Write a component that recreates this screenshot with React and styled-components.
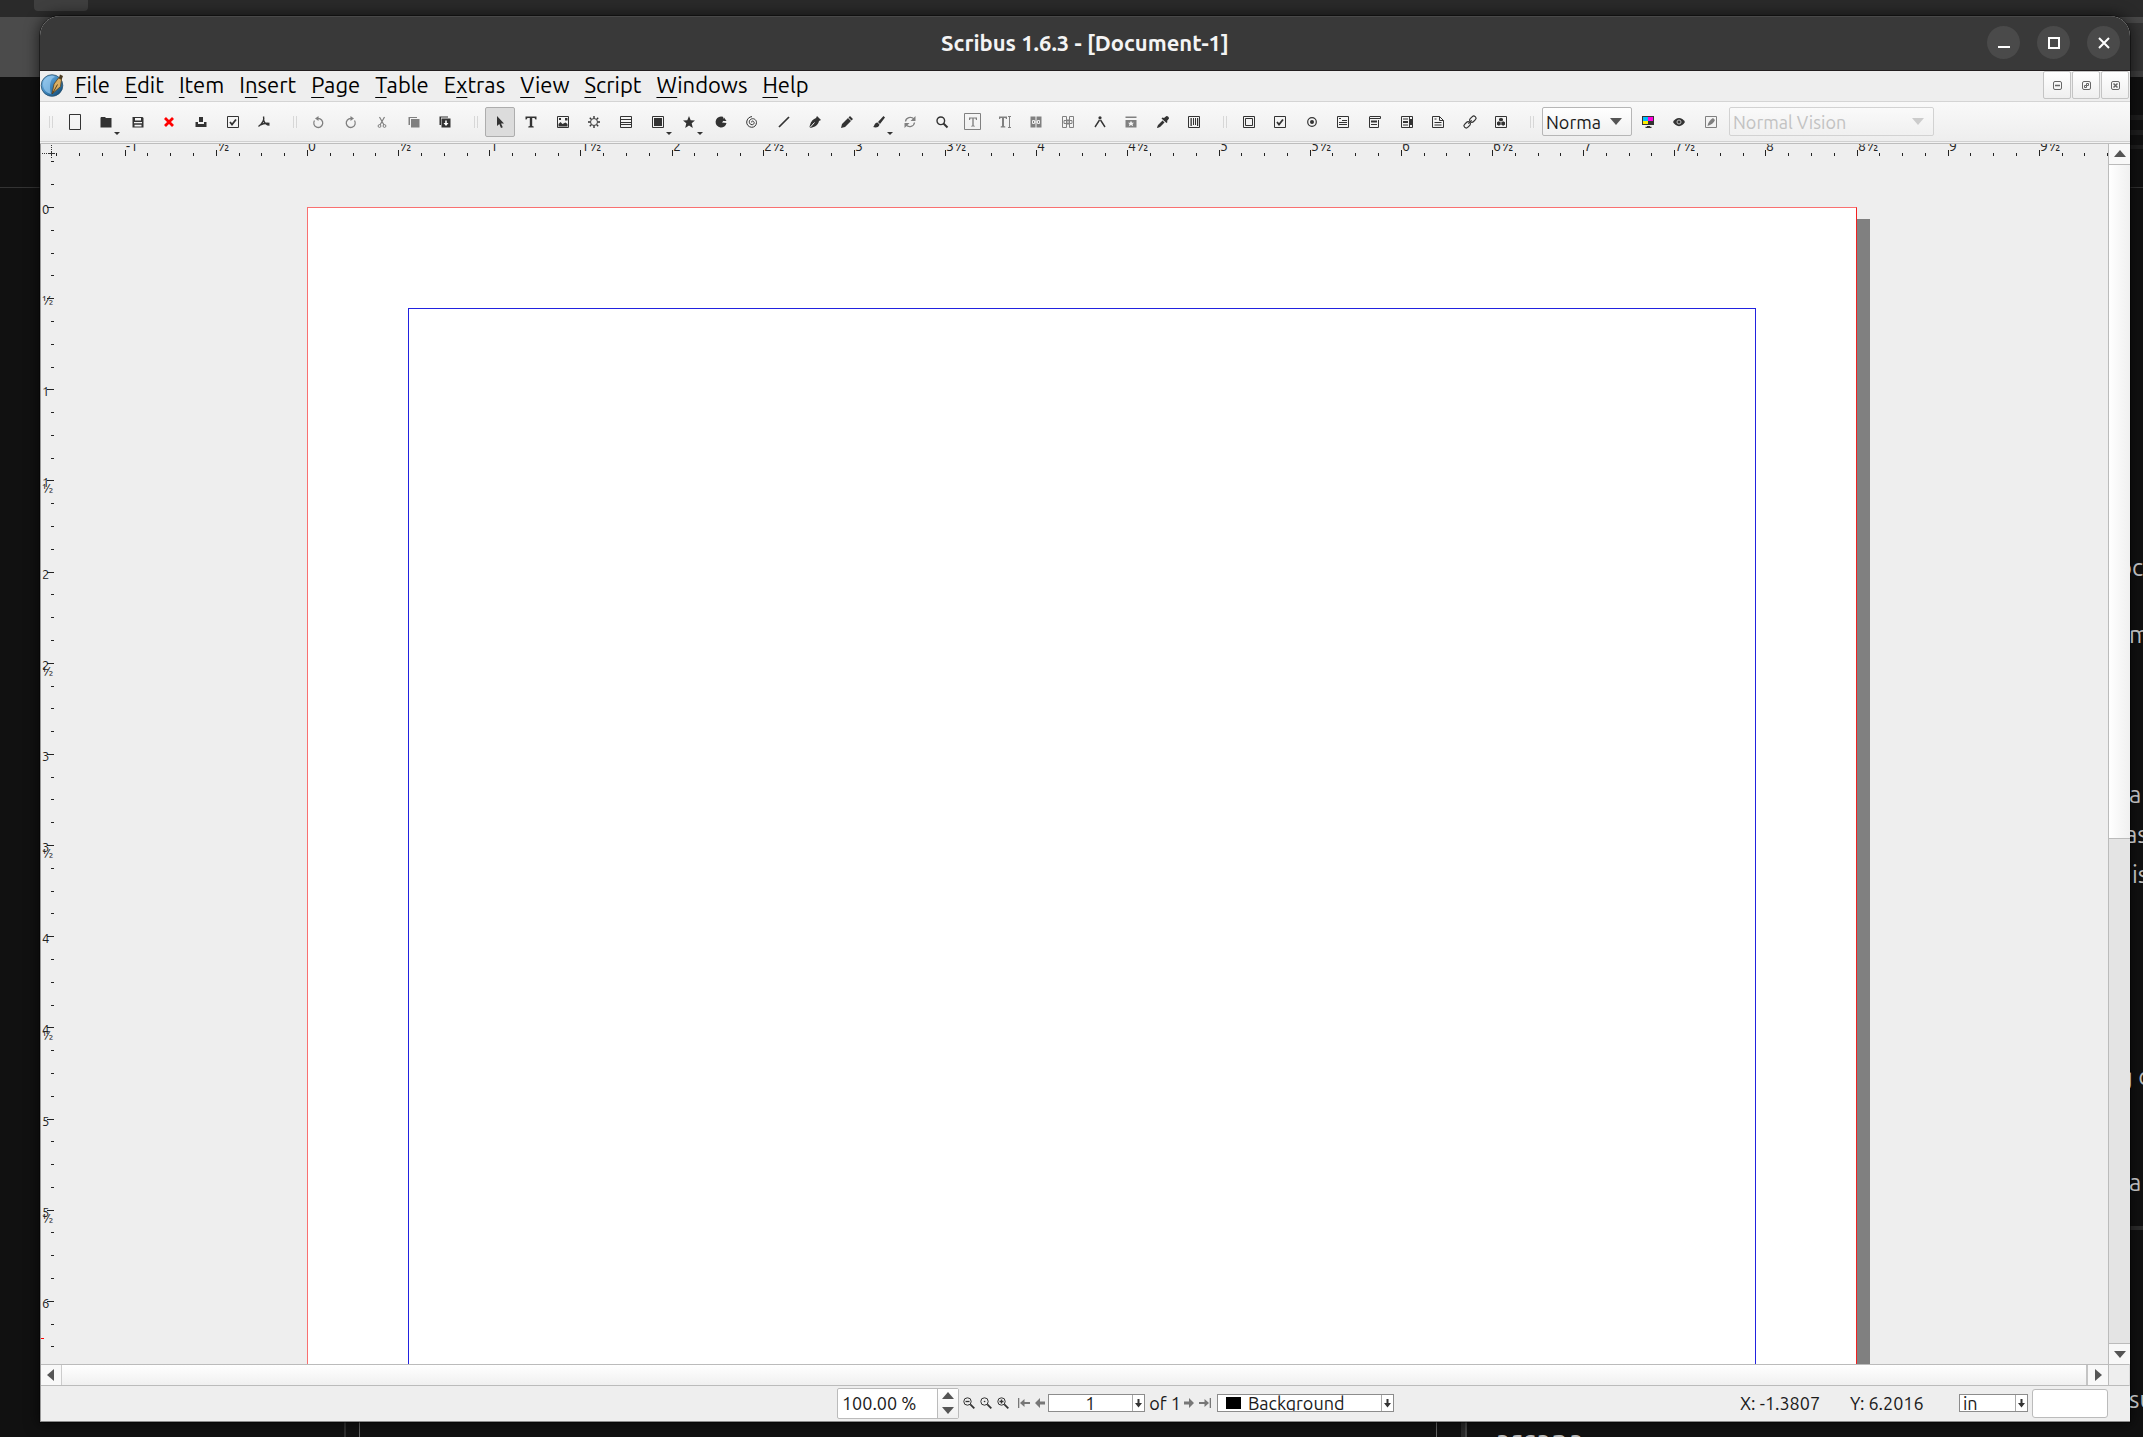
import React from "react";
import styled, { createGlobalStyle, css } from "styled-components";

const GlobalStyle = createGlobalStyle`
  *, *::before, *::after { box-sizing: border-box; }
  body { margin: 0; background: #111; }
  body, button, input, select {
    font-family: Ubuntu, "Noto Sans", "Open Sans", sans-serif;
    color: #1a1a1a;
  }
  button { padding: 0; border: 0; background: none; }
`;

/* ---------- desktop behind the window ---------- */

const Desktop = styled.div`
  position: relative;
  min-height: 100vh;
  overflow: hidden;
  background: #111;
`;

const Patch = styled.div`
  position: absolute;
  background: ${(p) => p.$color};
  top: ${(p) => p.$top}px;
  height: ${(p) => p.$height}px;
  ${(p) =>
    p.$side === "left"
      ? css`left: 0; width: 60px;`
      : p.$side === "right"
      ? css`right: 0; width: 60px;`
      : css`left: 0; right: 0;`}
`;

const DesktopTab = styled.div`
  position: absolute;
  left: 34px;
  top: 0;
  width: 54px;
  height: 11px;
  border-radius: 0 0 4px 4px;
  background: #3f3f3f;
`;

const BottomLine = styled.div`
  position: absolute;
  bottom: 0;
  left: ${(p) => p.$left}px;
  width: ${(p) => p.$width}px;
  height: 20px;
  background: ${(p) => p.$color};
`;

const Fragment = styled.span`
  position: absolute;
  top: ${(p) => p.$top}px;
  left: ${(p) => p.$left}px;
  font-size: ${(p) => (p.$large ? 30 : 24)}px;
  line-height: 32px;
  white-space: nowrap;
  color: #b9b9b9;
`;

/* ---------- window frame ---------- */

const Window = styled.main`
  position: absolute;
  inset: 16px 13px 15px 40px;
  display: flex;
  flex-direction: column;
  border-radius: 20px 20px 0 0;
  overflow: hidden;
  background: #eee;
  border-bottom: 1px solid #8a8a8a;
`;

const WindowShadow = styled.div`
  position: absolute;
  inset: 16px 13px 15px 40px;
  border-radius: 20px 20px 0 0;
  box-shadow: 0 0 14px 2px rgba(0, 0, 0, 0.55), 0 0 0 1px rgba(0, 0, 0, 0.4);
`;

const TitleBar = styled.header`
  flex: none;
  display: grid;
  grid-template-columns: 1fr auto 1fr;
  align-items: center;
  height: 55px;
  padding-bottom: 2px;
  background: #393939;
  border-top: 1px solid #484848;
  border-bottom: 1px solid #231f20;
`;

const Title = styled.h1`
  grid-column: 2;
  margin: 0;
  font-size: 22px;
  font-weight: 600;
  line-height: 28px;
  color: #f4f4f4;
`;

const WindowControls = styled.div`
  display: flex;
  justify-content: flex-end;
  gap: 17px;
  padding-right: 10px;
`;

const RoundButton = styled.button`
  display: grid;
  place-items: center;
  width: 33px;
  height: 33px;
  border-radius: 50%;
  background: #4a4a4a;
  color: #fff;
`;

/* ---------- menu bar ---------- */

const MenuBar = styled.nav`
  flex: none;
  display: flex;
  align-items: center;
  height: 31px;
  padding-bottom: 2px;
  border-bottom: 1px solid #d4d4d4;
`;

const MenuItem = styled.button`
  margin-left: 15px;
  font-size: 22px;
  line-height: 28px;
  color: #000;
  u {
    text-decoration-thickness: 1px;
    text-underline-offset: 4px;
  }
`;

const Logo = styled.svg`
  width: 24px;
  height: 24px;
  margin-right: -4px;
`;

const DocControls = styled.div`
  display: flex;
  gap: 1px;
  margin-left: auto;
  padding-right: 1px;
`;

const DocButton = styled.button`
  display: grid;
  place-items: center;
  width: 28px;
  height: 28px;
  border: 1px solid #c4c4c4;
  border-radius: 2px;
  background: linear-gradient(#fff, #efefef);
  color: #666;
`;

/* ---------- toolbar ---------- */

const ToolBar = styled.div`
  flex: none;
  display: flex;
  align-items: center;
  height: 42px;
  padding-bottom: 2px;
  background: linear-gradient(#f9f9f9, #eee 38px, #eee);
  border-bottom: 1px solid #bdbdbd;
  box-shadow: inset 0 -1px 0 #f2f2f2, inset 0 -2px 0 #d0d0d0;
`;

const Grip = styled.span`
  display: flex;
  justify-content: flex-end;
  width: ${(p) => (p.$first ? 19 : 23)}px;
  padding-right: 5px;
  &::after {
    content: "";
    width: 5px;
    height: 12px;
    background-image: linear-gradient(90deg, #ccc 1px, transparent 1px),
      linear-gradient(transparent 1px, #f5f5f5 1px);
    background-size: 3px 2px;
    opacity: 0.7;
  }
`;

const ToolGroup = styled.div`
  display: grid;
  grid-auto-flow: column;
  grid-auto-columns: 1fr;
  justify-items: center;
  width: ${(p) => p.$width}px;
`;

const ToolButton = styled.button`
  position: relative;
  display: grid;
  place-items: center;
  width: 30px;
  height: 30px;
  border: 1px solid transparent;
  border-radius: 2px;
  color: ${(p) => (p.$dim ? "#808080" : "#333")};
  ${(p) =>
    p.$active &&
    css`
      background: #dcdcdc;
      border-color: #adadad;
    `}
`;

const DropMark = styled.span`
  position: absolute;
  right: 0;
  bottom: 1px;
  border: 3px solid transparent;
  border-top-color: #333;
  border-bottom-width: 0;
`;

const Combo = styled.span`
  position: relative;
  display: block;
  width: ${(p) => p.$width}px;
  height: 29px;
  margin-left: 2px;
  select {
    appearance: none;
    width: 100%;
    height: 100%;
    padding: 0 26px 0 3px;
    border: 1px solid ${(p) => (p.$off ? "#d2d2d2" : "#b6b6b6")};
    border-radius: 2px;
    background: ${(p) => (p.$off ? "linear-gradient(#fafafa,#f0f0f0)" : "linear-gradient(#fff,#f0f0f0)")};
    font-size: 18px;
    color: ${(p) => (p.$off ? "#c2c2c2" : "#1a1a1a")};
    opacity: 1;
  }
  &::after {
    content: "";
    position: absolute;
    right: 10px;
    top: 11px;
    border: 6px solid transparent;
    border-top: 7px solid ${(p) => (p.$off ? "#ccc" : "#555")};
    border-bottom-width: 0;
    pointer-events: none;
  }
`;

/* ---------- workspace ---------- */

const Workspace = styled.section`
  flex: 1;
  min-height: 0;
  display: grid;
  grid-template-columns: 14px minmax(0, 1fr) 22px;
  grid-template-rows: 14px minmax(0, 1fr) 22px;
  border-left: 1px solid #999;
`;

const RulerSvg = styled.svg`
  display: block;
  width: 100%;
  height: 100%;
  overflow: hidden;
  font-size: ${(p) => (p.$vertical ? 13 : 14)}px;
  fill: #222;
`;

const Canvas = styled.div`
  position: relative;
  overflow: hidden;
`;

const Page = styled.div`
  position: absolute;
  left: 252px;
  top: 49px;
  bottom: -20px;
  width: 1550px;
  padding: 100px 100px 0;
  background: #fff;
  border: 1px solid #f97070;
  border-right-color: #f32020;
  box-shadow: 13px 12px 0 #808080;
`;

const MarginGuide = styled.div`
  height: 100%;
  border: 1px solid #2222e0;
  border-bottom: 0;
`;

const ScrollBar = styled.div`
  display: flex;
  flex-direction: ${(p) => (p.$vertical ? "column" : "row")};
  background: #e4e4e4;
  ${(p) =>
    p.$vertical
      ? css`grid-column: 3; grid-row: 1 / 3; border-left: 1px solid #bbb;`
      : css`grid-column: 1 / 3; grid-row: 3; border-top: 1px solid #bbb; border-bottom: 1px solid #bbb;`}
`;

const ScrollButton = styled.button`
  flex: none;
  display: grid;
  place-items: center;
  width: ${(p) => (p.$vertical ? "auto" : "20px")};
  height: ${(p) => (p.$vertical ? "20px" : "auto")};
  background: #f8f8f8;
  color: #555;
`;

const Thumb = styled.div`
  ${(p) =>
    p.$vertical
      ? css`
          flex: 4;
          border-top: 1px solid #bbb;
          border-bottom: 1px solid #bbb;
          background: linear-gradient(90deg, #fff, #f0f0f0);
        `
      : css`
          flex: 1;
          border-left: 1px solid #ccc;
          border-right: 2px solid #c4c4c4;
          background: linear-gradient(#fff, #f0f0f0);
        `}
`;

const Filler = styled.div`
  flex: 3;
  border-bottom: 1px solid #bbb;
`;

const ScrollCorner = styled.div`
  grid-column: 3;
  grid-row: 3;
  border: 1px solid #bbb;
  border-right-color: #ddd;
`;

/* ---------- status bar ---------- */

const StatusBar = styled.footer`
  flex: none;
  display: flex;
  align-items: center;
  height: 35px;
  padding-right: 22px;
  padding-bottom: 1px;
  border-left: 1px solid #999;
  font-size: 18px;
  line-height: 24px;
  color: #1a1a1a;
`;

const Space = styled.span`
  flex: ${(p) => p.$grow} 1 0;
`;

const SpinBox = styled.label`
  display: flex;
  width: 122px;
  height: 31px;
  margin-right: 2px;
  border: 1px solid #bbb;
  border-radius: 2px;
  background: #fff;
  input {
    flex: 1;
    min-width: 0;
    padding: 0 4px;
    border: 0;
    background: none;
    font-size: 18px;
  }
`;

const SpinButtons = styled.span`
  display: grid;
  width: 21px;
  border-left: 1px solid #bbb;
  background: linear-gradient(#fff, #f0f0f0);
  button {
    display: grid;
    place-items: center;
    color: #555;
  }
`;

const MiniButton = styled.button`
  display: grid;
  place-items: center;
  width: ${(p) => (p.$arrow ? 16 : 17)}px;
  height: 20px;
  color: ${(p) => (p.$arrow ? "#777" : "#333")};
`;

const ButtonPair = styled.span`
  display: flex;
  margin: 0 ${(p) => p.$after}px 0 ${(p) => p.$before}px;
`;

const MiniCombo = styled.span`
  display: flex;
  align-items: center;
  width: ${(p) => p.$width}px;
  height: 18px;
  overflow: hidden;
  border: 1px solid #8c8c8c;
  background: #fff;
  select {
    appearance: none;
    flex: 1;
    min-width: 0;
    height: 26px;
    padding: 0 3px;
    border: 0;
    background: none;
    font-size: 18px;
    text-align: ${(p) => p.$align || "left"};
    text-align-last: ${(p) => p.$align || "left"};
  }
`;

const MiniArrow = styled.span`
  display: grid;
  place-items: center;
  align-self: stretch;
  width: 12px;
  border-left: 1px solid #aaa;
  color: #333;
  pointer-events: none;
`;

const Swatch = styled.span`
  width: 15px;
  height: 12px;
  margin: 0 4px 0 8px;
  background: #000;
`;

const PageTotal = styled.span`
  width: 36px;
  text-align: right;
  white-space: nowrap;
`;

const Coordinate = styled.span`
  width: ${(p) => p.$width}px;
  white-space: nowrap;
`;

const Message = styled.input`
  width: 76px;
  height: 29px;
  margin-left: 4px;
  border: 1px solid #bbb;
  border-radius: 3px;
  background: #fff;
`;

/* ---------- icons, drawn on a 12 unit grid ---------- */

const S = { fill: "none", stroke: "currentColor" };

const glyphs = {
  new: <path {...S} d="M.5-1.5h11v15H.5z" />,
  open: <path d="M1 1h4l1 1h5.500v9.500H.500V2z" />,
  save: <><path d="M1 1h9.500l1 1v9.500H.500V1z" /><path fill="#f4f4f4" d="M3 2h6v2.500H3zM2 6h8v1.300H2zM2.500 8.800h7v1.700h-7z" /></>,
  close: <path stroke="#f00" strokeWidth="2.800" fill="none" d="M2 2l8 8M10 2l-8 8" />,
  print: <path d="M4 1h4v5h-4zM.5 6h2.500v2h6V6h2.500v5H.5z" />,
  preflight: <><path {...S} d="M.5.500h11v11H.500z" /><path {...S} strokeWidth="1.800" d="M3 6l2 2.500L9 3.500" /></>,
  pdf: <path {...S} strokeWidth="1.400" d="M5.500.500c1 3 0 6-5 10M5.500 4c1 3 3 5 6 5M2 9c3-1.500 6-2 9.500-1.500" />,
  undo: <><path {...S} strokeWidth="1.300" d="M5 2.500a4.500 4.500 0 1 1-3.500 2" /><path d="M5.500 0v5L2 2.500z" /></>,
  redo: <><path {...S} strokeWidth="1.300" d="M7 2.500a4.500 4.500 0 1 0 3.500 2" /><path d="M6.500 0v5L10 2.500z" /></>,
  cut: <><path {...S} strokeWidth="1.200" d="M3.500 1l4.500 8M8.500 1L4 9" /><circle {...S} cx="3.500" cy="10" r="1.400" /><circle {...S} cx="8.500" cy="10" r="1.400" /></>,
  copy: <path d="M3 3h8.500v8.500H3zM.500 1H9v1H2v7H.500z" />,
  paste: <><path d="M2.500 2.500h9v9h-9zM.500 .500h8.500v1H2V9H.500z" /><path fill="#fff" d="M6.200 4.500h1.600v2.500h1.700L7 10 4.500 7h1.700z" /></>,
  select: <path d="M3 0v10l2.300-2L7 12l1.800-.800L7 7.500h3z" />,
  text: <path d="M.500.500h11v3h-1L9.500 2H7.200v8l1.500.500v1H3.300v-1L4.800 10V2H2.500L1.500 3.500h-1z" />,
  image: <><path {...S} d="M.500.500h11v11H.500z" /><path d="M1.500 10.500V8l2-2 2 2 3-1.500 2 1.500v2.500zM8 2h2.500v2.500H8zM2 2h2v2H2z" /></>,
  gear: <><circle {...S} cx="6" cy="6" r="3.500" /><path {...S} strokeWidth="1.400" d="M6 0v2M6 10v2M0 6h2M10 6h2M1.800 1.800l1.400 1.400M8.800 8.800l1.400 1.400M10.200 1.800L8.800 3.200M3.200 8.800l-1.400 1.400" /></>,
  table: <path {...S} d="M.500.500h11v11H.500zM1 3.500h10M1 6.500h10M1 8.500h10" />,
  shape: <><path {...S} d="M.500.500h11v11H.500z" /><path d="M2 2h8v8H2z" /></>,
  star: <path d="M6 0l1.700 4.200 4.300.300-3.300 2.800L9.800 12 6 9.500 2.200 12l1.100-4.700L0 4.500l4.300-.300z" />,
  arc: <path d="M6 .500a5.500 5.500 0 1 0 5.500 6.500L7 6.500 9 4l-1-3.200zM9 1.500L8.500 5h3z" />,
  spiral: <path {...S} d="M6 6.500c-1-.5 0-2 1.300-1.200 1.700 1 .7 3.500-1.300 3.400C3 8.500 2.500 5 4.500 3.500c2.500-2 6 0 6 3C10.500 9.500 8 11.500 5.500 11.300 2.500 11 .5 8.500.7 6 .9 3 3.300.700 6 .600" />,
  line: <path {...S} strokeWidth="1.700" d="M1 11L11 1" />,
  pen: <><path d="M8 0l4 4-2 1c-1 4-4 6-8.500 7L.500 11C1.500 6.500 3 3.500 7 2z" /><path stroke="#f4f4f4" d="M1 11.500l4.500-5" /></>,
  pencil: <path d="M9 0l3 3-1.500 1.500-3-3zM7 2l3 3-6 6-4 1 1-4z" />,
  brush: <path d="M10.500 0L12 1.500 7 8 5 6zM4.500 6.500L6.500 8.500C6 11.500 3 12 0 11c1.500-.500 1-4 4.500-4.500z" />,
  rotate: <><path {...S} strokeWidth="1.300" d="M1.500 5.500C2 1.500 7 0 10 3M10.500 6.500C10 10.500 5 12 2 9" /><path d="M11.500 0v5h-5zM.500 12V7h5z" /></>,
  zoom: <><circle {...S} strokeWidth="1.400" cx="4.800" cy="4.800" r="3.800" /><path {...S} strokeWidth="2" d="M7.500 7.500l4 4" /></>,
  frameText: <><path {...S} d="M-2.500-2.500h16v16h-16z" /><path d="M2 1.500h8V4H9L8.500 2.500H6.700v7l1.300.500v.500H4V10l1.300-.500v-7H3.500L3 4H2z" /></>,
  storyText: <path d="M0 .500h8V3H7L6.500 2H5v8l1.300.500v1H1.700v-1L3 10V2H1.500L1 3H0zM9 0h3v1h-1v10h1v1H9v-1h1V1H9z" />,
  link: <><path d="M.500 .500h5v11h-5zM6.500 .500h5v11h-5z" /><path {...S} stroke="#eee" d="M2.500 4.500h2v3h-2zM7.500 4.500h2v3h-2z" /><path stroke="#eee" d="M4 6h4" /></>,
  unlink: <><path {...S} d="M.500.500h4v11h-4zM7.500.500h4v11h-4z" /><path {...S} d="M2 4.500h8v3H2zM6 3v6" /></>,
  measure: <><circle cx="6" cy="1.800" r="1.600" /><path {...S} strokeWidth="1.400" d="M5.500 4L1 11M6.500 4L11 11" /></>,
  copyProps: <><path d="M.500.500h11V2H.500zM.500 4h11v7.500H.500z" /><path fill="#f4f4f4" d="M6 4.800l1 2h2L7.500 8l.700 2.200L6 9l-2.200 1.200L4.500 8 3 6.800h2z" /></>,
  dropper: <path d="M9.500 0C11 0 12 1 12 2.500L10 5l.500 1-1 1-5-4.500 1-1 1.500.500zM5.500 4.500l2 2L3 11l-2.500 1-.500-.500L1 9z" />,
  barcode: <><path {...S} d="M.500.500h11v11H.500z" /><path d="M2.500 2h1.300v8H2.500zM5 2h1v7H5zM7 2h1v7H7zM9 2h1.200v8H9z" /></>,
  button: <path {...S} strokeWidth="1" d="M.500.500h11v11H.500zM2.500 2.500h7v7h-7z" />,
  check: <><path {...S} d="M.500.500h11v11H.500z" /><path {...S} strokeWidth="1.800" d="M3 6l2 2.500L9 3.500" /></>,
  radio: <><circle {...S} strokeWidth="1.200" cx="6" cy="6" r="4.300" /><circle cx="6" cy="6" r="2" /></>,
  textField: <path {...S} d="M.500.500h11v11H.500zM2 2.500h2M5 4.500h5M2 6.500h8M2 8.500h8" />,
  comboField: <><path {...S} d="M.500 1v10.500h9V4M.500 .500h11v2H.500" /><path d="M2 4.500h6V6.500H2zM2 8h6v1H2z" /></>,
  listField: <><path {...S} d="M.500.500h11v11H.500zM8.500.500v11" /><path d="M2 2.500h5v1H2zM2 5h5v2H2zM2 8.500h5v1H2zM9 3h2v6H9z" /></>,
  note: <path {...S} d="M.500.500h7l4 4v7H.500zM7.500.500v4h4M2.500 3h2M2.500 6.500h7M2.500 9h7" />,
  chain: <g transform="rotate(-45 6 6)"><rect {...S} strokeWidth="1.200" x="-1.500" y="3.800" width="7" height="4.400" rx="2" /><rect {...S} strokeWidth="1.200" x="6.500" y="3.800" width="7" height="4.400" rx="2" /><path {...S} d="M3.500 6h5" /></g>,
  cube: <><path {...S} d="M.500.500h11v11H.500z" /><path d="M6 1.800l2 1v1.700L6 5.500 4 4.500V2.800zM3.800 5.200l1.900 1v2.500l-1.900 1-1.800-1V6.200zM8.200 5.200l1.800 1v2.500l-1.800 1-1.900-1V6.200z" /></>,
  screen: <><path fill="#333" d="M0 0h12v9H0zM5 10h3v.700h1.500V12h-6v-1.300H5z" /><path fill="#0bf" d="M1 1h5v4H1z" /><path fill="#f0d" d="M6 1h5v4H6z" /><path fill="#fe0" d="M1 5h5v3H1z" /></>,
  eye: <><path d="M0 6c3-5.500 9-5.500 12 0-3 5.500-9 5.500-12 0z" /><circle fill="none" stroke="#bbb" cx="6" cy="6" r="2" /></>,
  editPreview: <><path {...S} d="M.500.500h11v11H.500z" /><path d="M8 2l2 2c-1 3-4 5-7.500 6C3 6.500 5 4 8 2z" /></>,
};

function Icon({ name }) {
  return (
    <svg width="12" height="12" viewBox="0 0 12 12" overflow="visible" fill="currentColor" aria-hidden="true">
      {glyphs[name]}
    </svg>
  );
}

function Triangle({ dir, size = 12 }) {
  const points = { up: "0,8 6,1 12,8", down: "0,2 6,9 12,2", left: "9,0 2,6 9,12", right: "3,0 10,6 3,12" };
  return (
    <svg width={size} height={dir === "up" || dir === "down" ? 10 : 12} viewBox={dir === "up" || dir === "down" ? "0 0 12 10" : "0 0 12 12"} aria-hidden="true">
      <polygon points={points[dir]} fill="currentColor" />
    </svg>
  );
}

function DownArrow() {
  return (
    <svg width="7" height="9" viewBox="0 0 7 9" fill="currentColor" aria-hidden="true">
      <path d="M2.500 0h2v4H7L3.500 8.500 0 4h2.500z" />
    </svg>
  );
}

function Magnifier({ mark }) {
  return (
    <svg width="12" height="12" viewBox="0 0 12 12" {...S} aria-hidden="true">
      <circle cx="4.500" cy="4.500" r="3.700" />
      <path strokeWidth="1.800" d="M7.300 7.300l4 4" />
      <path strokeWidth="1.300" d={mark} />
    </svg>
  );
}

function PageArrow({ back, end }) {
  return (
    <svg width="12" height="12" viewBox="0 0 12 12" fill="currentColor" aria-hidden="true">
      <g transform={back ? undefined : "matrix(-1 0 0 1 12 0)"}>
        {end && <path d="M0 1h1.300v10H0z" />}
        <path d={end ? "M2 6l4.500-4v3H12v2H6.500v3z" : "M1 6l5-5v3.500h5v3H6V11z"} />
      </g>
    </svg>
  );
}

/* ---------- rulers ---------- */

const INCH = 182.3;
const EIGHTH = INCH / 8;

function label(step) {
  const whole = Math.trunc(step / 8);
  const half = step % 8 !== 0;
  return { whole: whole !== 0 || !half ? String(whole) : "", half: half ? "½" : "" };
}

function marks(from, to, origin) {
  const list = [];
  for (let step = from; step <= to; step += 1) {
    list.push({ step, at: Math.round(origin + step * EIGHTH), major: step % 4 === 0 });
  }
  return list;
}

function HorizontalRuler() {
  return (
    <RulerSvg aria-label="Horizontal ruler">
      {marks(-11, 84, 252).map(({ step, at, major }) => {
        const { whole, half } = label(step);
        return (
          <g key={step}>
            <rect x={at} y={major ? 6 : 9} width="1" height={major ? 6 : 3} />
            {major && <text x={at + 1} y="7">{whole + half}</text>}
          </g>
        );
      })}
    </RulerSvg>
  );
}

function VerticalRuler() {
  return (
    <RulerSvg $vertical aria-label="Vertical ruler">
      {marks(-2, 60, 49).map(({ step, at, major }) => {
        const { whole, half } = label(step);
        return (
          <g key={step}>
            <rect x={major ? 6 : 10} y={at} width={major ? 7 : 3} height="1" />
            {major && whole && <text x="1" y={at + 7}>{whole}</text>}
            {major && half && <text x="1" y={at + (whole ? 13 : 7)}>{half}</text>}
          </g>
        );
      })}
      <rect x="0" y="1180" width="3" height="1" fill="#f00" />
    </RulerSvg>
  );
}

/* ---------- data ---------- */

const menus = [
  ["", "F", "ile"], ["", "E", "dit"], ["", "I", "tem"], ["I", "n", "sert"], ["", "P", "age"],
  ["", "T", "able"], ["E", "x", "tras"], ["", "V", "iew"], ["", "S", "cript"], ["", "W", "indows"], ["", "H", "elp"],
];

const groups = [
  { width: 221, tools: ["new", "open+", "save", "close", "print", "preflight", "pdf"] },
  { width: 158, tools: ["undo-", "redo-", "cut-", "copy-", "paste"] },
  {
    width: 726,
    tools: ["select*", "text", "image", "gear", "table", "shape+", "star+", "arc", "spiral", "line", "pen", "pencil",
      "brush+", "rotate-", "zoom", "frameText-", "storyText-", "link-", "unlink-", "measure", "copyProps-", "dropper", "barcode"],
  },
  { width: 284, tools: ["button", "check", "radio", "textField", "comboField", "listField", "note", "chain", "cube"] },
];

const fragments = [
  ["oc", 552, 2118], ["m", 619, 2129], ["a", 779, 2129], ["as", 819, 2125], ["is", 859, 2132],
  ["g c", 1061, 2119], ["a", 1167, 2129], ["su", 1384, 2129],
];

function Tool({ spec }) {
  const name = spec.replace(/[^a-zA-Z]/g, "");
  return (
    <ToolButton type="button" aria-label={name} $active={spec.endsWith("*")} $dim={spec.endsWith("-")}>
      <Icon name={name} />
      {spec.endsWith("+") && <DropMark />}
    </ToolButton>
  );
}

export default function App() {
  return (
    <>
      <GlobalStyle />
      <Desktop>
        <Patch $top={0} $height={17} $color="#2a2a2a" />
        <Patch $side="left" $top={17} $height={60} $color="#4b4b4b" />
        <Patch $side="right" $top={17} $height={60} $color="#333" />
        <Patch $side="right" $top={17} $height={6} $color="#484848" />
        <Patch $side="right" $top={71} $height={6} $color="#3e3e3e" />
        <Patch $side="right" $top={115} $height={5} $color="#1f1f1f" />
        <Patch $side="right" $top={130} $height={5} $color="#1f1f1f" />
        <Patch $side="right" $top={145} $height={4} $color="#1f1f1f" />
        <Patch $top={187} $height={1} $color="#333" />
        <Patch $side="right" $top={1226} $height={4} $color="#2e2e2e" />
        <DesktopTab />
        <BottomLine $left={344} $width={2} $color="#2e2e2e" />
        <BottomLine $left={359} $width={1} $color="#666" />
        <BottomLine $left={1436} $width={1} $color="#666" />
        <BottomLine $left={1461} $width={4} $color="#2a2a2a" />
        <BottomLine $left={1465} $width={2} $color="#444" />
        <WindowShadow />
        {fragments.map(([text, top, left]) => (
          <Fragment key={top} $top={top} $left={left}>{text}</Fragment>
        ))}
        <Fragment $large $top={1424} $left={1495}>arcana</Fragment>

        <Window>
          <TitleBar>
            <Title>Scribus 1.6.3 - [Document-1]</Title>
            <WindowControls>
              <RoundButton type="button" aria-label="Minimize">
                <svg width="12" height="12" {...S} strokeWidth="2"><path d="M0 10h12" /></svg>
              </RoundButton>
              <RoundButton type="button" aria-label="Maximize">
                <svg width="14" height="14" {...S} strokeWidth="2"><path d="M2 2h10v10H2z" /></svg>
              </RoundButton>
              <RoundButton type="button" aria-label="Close">
                <svg width="12" height="12" {...S} strokeWidth="2"><path d="M1 1l10 10M11 1L1 11" /></svg>
              </RoundButton>
            </WindowControls>
          </TitleBar>

          <MenuBar>
            <Logo viewBox="0 0 24 24" aria-hidden="true">
              <defs>
                <linearGradient id="ball" x1="0" y1="0" x2="1" y2="1">
                  <stop offset="0" stopColor="#8cc4ee" />
                  <stop offset=".5" stopColor="#3d86bd" />
                  <stop offset="1" stopColor="#0a3f66" />
                </linearGradient>
              </defs>
              <circle cx="12" cy="12.500" r="10.800" fill="url(#ball)" stroke="#28506e" strokeWidth=".8" />
              <path d="M4 7c4-5 10-5 11-3-5 1-6 9-4 17C5 20 1 13 4 7z" fill="#a6d3f5" opacity=".6" />
              <path d="M20 1.500l3 1.500-1.500 4-3-1z" fill="#4a3a20" />
              <path d="M18.500 5l3 1.500-1 7-8.500 7.500 2-10z" fill="#d9ae62" stroke="#5a4220" strokeWidth=".8" />
              <path d="M12.500 20.500l5-9" stroke="#4a3416" strokeWidth=".9" />
            </Logo>
            {menus.map(([before, key, after]) => (
              <MenuItem key={key + after} type="button">{before}<u>{key}</u>{after}</MenuItem>
            ))}
            <DocControls>
              <DocButton type="button" aria-label="Minimize document">
                <svg width="9" height="9" {...S}><rect x=".5" y=".5" width="8" height="8" rx="1.500" /><path d="M2 4.500h5" strokeWidth="1.500" /></svg>
              </DocButton>
              <DocButton type="button" aria-label="Restore document">
                <svg width="9" height="9" {...S}><rect x=".5" y=".5" width="8" height="8" rx="1.500" /><path d="M2.500 6.500v-2h2v2zM4.500 2.500h2v2h-2z" /></svg>
              </DocButton>
              <DocButton type="button" aria-label="Close document">
                <svg width="9" height="9" {...S}><rect x=".5" y=".5" width="8" height="8" rx="1.500" /><path d="M2.500 2.500l4 4M6.500 2.500l-4 4" strokeWidth="1.500" /></svg>
              </DocButton>
            </DocControls>
          </MenuBar>

          <ToolBar>
            {groups.map((group, index) => (
              <React.Fragment key={group.width}>
                <Grip $first={index === 0} />
                <ToolGroup $width={group.width}>
                  {group.tools.map((spec) => <Tool key={spec} spec={spec} />)}
                </ToolGroup>
              </React.Fragment>
            ))}
            <Grip />
            <Combo $width={90}>
              <select aria-label="Preview quality"><option>Norma</option></select>
            </Combo>
            <ToolGroup $width={95}>
              <Tool spec="screen" />
              <Tool spec="eye" />
              <Tool spec="editPreview-" />
            </ToolGroup>
            <Combo $width={205} $off>
              <select aria-label="Vision mode" disabled><option>Normal Vision</option></select>
            </Combo>
          </ToolBar>

          <Workspace>
            <svg width="14" height="14" {...S} stroke="#333" strokeDasharray="1 1" aria-hidden="true">
              <path d="M1 9.500h13M10.500 1v13" />
              <path strokeDasharray="none" d="M8 9.500h5M10.500 7v5" />
            </svg>
            <HorizontalRuler />
            <ScrollBar $vertical>
              <ScrollButton $vertical type="button" aria-label="Scroll up"><Triangle dir="up" /></ScrollButton>
              <Thumb $vertical />
              <Filler />
              <ScrollButton $vertical type="button" aria-label="Scroll down"><Triangle dir="down" /></ScrollButton>
            </ScrollBar>
            <VerticalRuler />
            <Canvas>
              <Page><MarginGuide /></Page>
            </Canvas>
            <ScrollBar>
              <ScrollButton type="button" aria-label="Scroll left"><Triangle dir="left" /></ScrollButton>
              <Thumb />
              <ScrollButton type="button" aria-label="Scroll right"><Triangle dir="right" /></ScrollButton>
            </ScrollBar>
            <ScrollCorner />
          </Workspace>

          <StatusBar>
            <Space $grow={23} />
            <SpinBox>
              <input aria-label="Zoom" defaultValue="100.00 %" />
              <SpinButtons>
                <button type="button" aria-label="Increase zoom"><Triangle dir="up" /></button>
                <button type="button" aria-label="Decrease zoom"><Triangle dir="down" /></button>
              </SpinButtons>
            </SpinBox>
            <MiniButton type="button" aria-label="Zoom out"><Magnifier mark="M2.500 4.500h4" /></MiniButton>
            <MiniButton type="button" aria-label="Zoom to 100%"><Magnifier mark="M3.800 4.500h1.500" /></MiniButton>
            <MiniButton type="button" aria-label="Zoom in"><Magnifier mark="M2.500 4.500h4M4.500 2.500v4" /></MiniButton>
            <ButtonPair $before={4} $after={0}>
              <MiniButton $arrow type="button" aria-label="First page"><PageArrow back end /></MiniButton>
              <MiniButton $arrow type="button" aria-label="Previous page"><PageArrow back /></MiniButton>
            </ButtonPair>
            <MiniCombo $width={97} $align="center">
              <select aria-label="Page"><option>1</option></select>
              <MiniArrow><DownArrow /></MiniArrow>
            </MiniCombo>
            <PageTotal>of 1</PageTotal>
            <ButtonPair $before={0} $after={4}>
              <MiniButton $arrow type="button" aria-label="Next page"><PageArrow /></MiniButton>
              <MiniButton $arrow type="button" aria-label="Last page"><PageArrow end /></MiniButton>
            </ButtonPair>
            <MiniCombo $width={177}>
              <Swatch />
              <select aria-label="Layer"><option>Background</option></select>
              <MiniArrow><DownArrow /></MiniArrow>
            </MiniCombo>
            <Space $grow={10} />
            <Coordinate $width={110}>X: -1.3807</Coordinate>
            <Coordinate $width={109}>Y: 6.2016</Coordinate>
            <MiniCombo $width={69}>
              <select aria-label="Unit"><option>in</option></select>
              <MiniArrow><DownArrow /></MiniArrow>
            </MiniCombo>
            <Message aria-label="Progress" readOnly />
          </StatusBar>
        </Window>
      </Desktop>
    </>
  );
}
